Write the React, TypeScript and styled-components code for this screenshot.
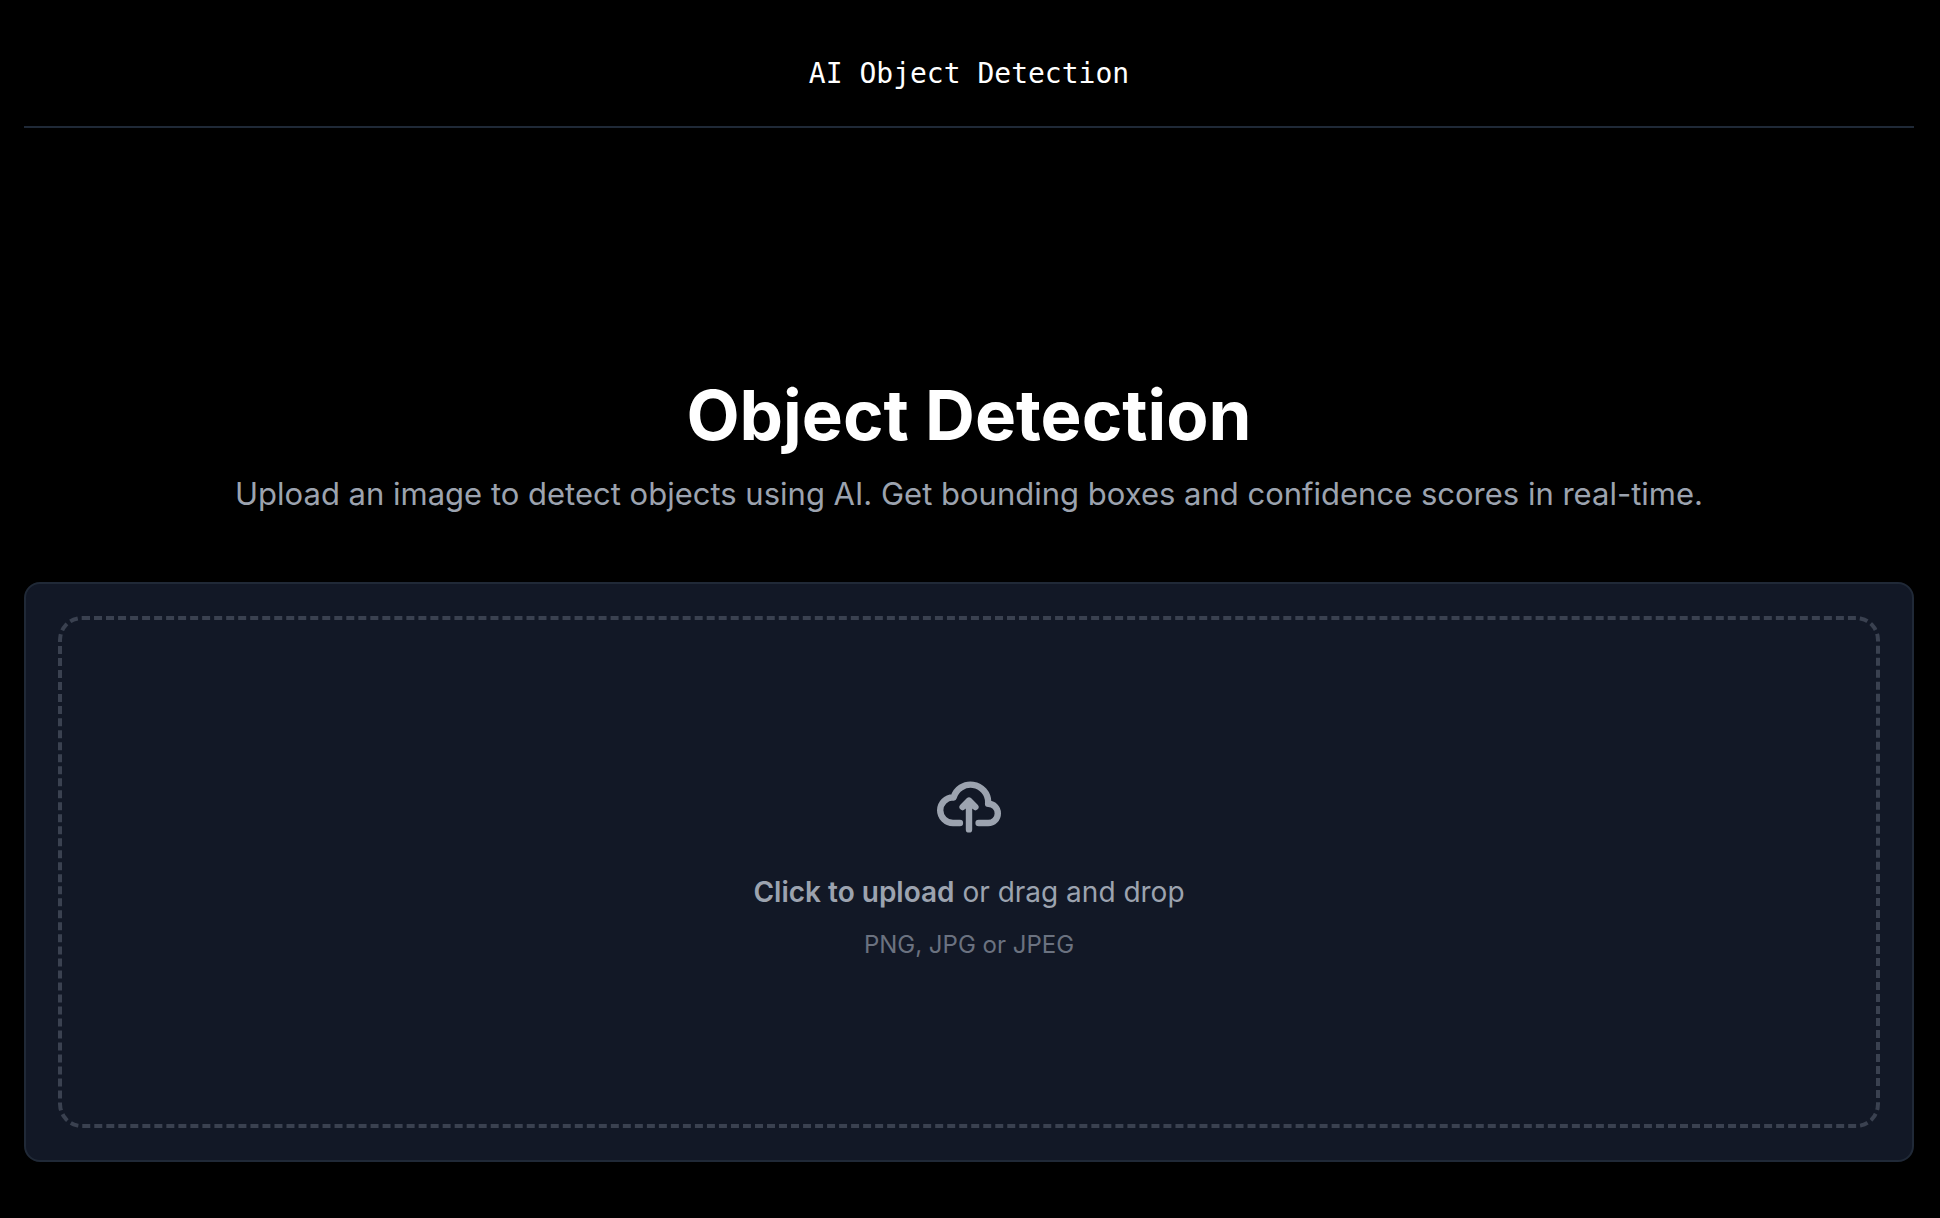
import { useState } from "react";
import type { ChangeEvent, DragEvent } from "react";
import styled, { createGlobalStyle } from "styled-components";

const GlobalStyle = createGlobalStyle`
  *, *::before, *::after { box-sizing: border-box; }
  body {
    margin: 0;
    background: #000;
    color: #fff;
    font-family: Inter, "Open Sans", sans-serif;
    -webkit-font-smoothing: antialiased;
  }
`;

const Page = styled.div`
  min-height: 100vh;
  padding: 0 26px 56px 24px;
`;

const Header = styled.header`
  display: flex;
  justify-content: center;
  padding: 53px 0 31px;
  border-bottom: 2px solid #1f2937;
`;

const Brand = styled.p`
  margin: 0;
  font-family: "DejaVu Sans Mono", monospace;
  font-size: 28px;
  line-height: 42px;
`;

const Intro = styled.section`
  display: flex;
  flex-direction: column;
  align-items: center;
  padding: 251px 0 65px;
  text-align: center;
`;

const Title = styled.h1`
  margin: 0 0 20px;
  font-size: 69px;
  font-weight: 700;
  line-height: 72px;
`;

const Subtitle = styled.p`
  margin: 0;
  font-size: 31px;
  line-height: 46px;
  color: #9ca3af;
`;

const Card = styled.main`
  padding: 32px;
  border: 2px solid #202937;
  border-radius: 16px;
  background: #121826;
`;

const FileInput = styled.input`
  position: absolute;
  width: 1px;
  height: 1px;
  opacity: 0;
`;

const DropZone = styled.label`
  position: relative;
  display: flex;
  flex-direction: column;
  align-items: center;
  justify-content: center;
  min-height: 512px;
  padding-bottom: 8px;
  border: 4px dashed #3a4150;
  border-radius: 24px;
  color: #9ca3af;
  cursor: pointer;

  &:hover { border-color: #6b7280; }
`;

const UploadIcon = styled.svg`
  width: 64px;
  height: 64px;
  margin-bottom: 32px;
`;

const Prompt = styled.span`
  margin-bottom: 16px;
  font-size: 28px;
  line-height: 42px;
`;

const Strong = styled.span`
  font-weight: 600;
`;

const Hint = styled.span`
  font-size: 24px;
  line-height: 32px;
  color: #6b7280;
`;

export default function App() {
  const [fileName, setFileName] = useState("");

  const handleChange = (event: ChangeEvent<HTMLInputElement>) => {
    setFileName(event.target.files?.[0]?.name ?? "");
  };

  const handleDrop = (event: DragEvent<HTMLLabelElement>) => {
    event.preventDefault();
    setFileName(event.dataTransfer.files[0]?.name ?? "");
  };

  return (
    <>
      <GlobalStyle />
      <Page>
        <Header>
          <Brand>AI Object Detection</Brand>
        </Header>
        <Intro>
          <Title>Object Detection</Title>
          <Subtitle>
            Upload an image to detect objects using AI. Get bounding boxes and confidence scores in real-time.
          </Subtitle>
        </Intro>
        <Card>
          <DropZone htmlFor="image-file" onDragOver={(e) => e.preventDefault()} onDrop={handleDrop}>
            <FileInput id="image-file" type="file" accept="image/png,image/jpeg" onChange={handleChange} />
            <UploadIcon viewBox="0 0 20 16" fill="none" aria-hidden="true">
              <path
                stroke="currentColor"
                strokeWidth="2"
                strokeLinecap="round"
                strokeLinejoin="round"
                d="M13 13h3a3 3 0 0 0 0-6h-.025A5.56 5.56 0 0 0 16 6.5 5.5 5.5 0 0 0 5.207 5.021C5.137 5.017 5.071 5 5 5a4 4 0 0 0 0 8h2.167M10 15V6m0 0L8 8m2-2 2 2"
              />
            </UploadIcon>
            <Prompt>
              <Strong>Click to upload</Strong> or drag and drop
            </Prompt>
            <Hint>{fileName || "PNG, JPG or JPEG"}</Hint>
          </DropZone>
        </Card>
      </Page>
    </>
  );
}
